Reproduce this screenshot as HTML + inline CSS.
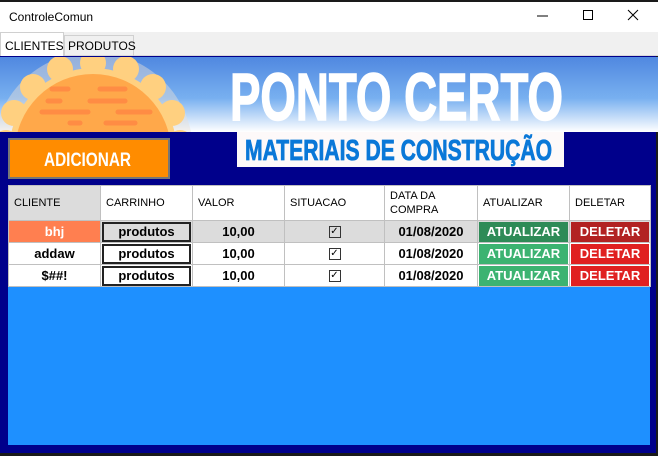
<!DOCTYPE html>
<html><head><meta charset="utf-8"><style>
*{margin:0;padding:0;box-sizing:border-box}
body{width:658px;height:456px;overflow:hidden;background:#1a1a1a;font-family:"Liberation Sans",sans-serif;position:relative}
.abs{position:absolute}
#title{left:0;top:2px;width:658px;height:30px;background:#fff;font-size:12px}
#tabs{left:0;top:32px;width:658px;height:24px;background:#f0f0f0;border-bottom:1px solid #d9d9d9}
.tab{position:absolute;font-size:12px;color:#000;border:1px solid #d0d0d0;border-bottom:none;white-space:nowrap}
#navy{left:0;top:56px;width:656px;height:397px;background:#00008b}
#grid{left:8px;top:185px;width:642px;height:260px;background:#1e90ff}
table{position:absolute;left:8px;top:185px;border-collapse:collapse;font-size:11px;table-layout:fixed;width:642px}
td{border:1px solid #c0c0c0;padding:0;height:22px;text-align:center;font-weight:bold;font-size:13px;background:#fff;overflow:hidden;line-height:20px}
tr.h td{height:35px;font-weight:normal;font-size:11px;text-align:left;padding-left:5px;line-height:14px}
.p{display:block;margin:0 1px;border:2px solid #222;height:20px;line-height:16px}
.at{background:#3cb371;color:#fff;height:20px;line-height:20px;margin:0 1px}
.de{background:#e02020;color:#fff;height:20px;line-height:20px;margin:0 1px}
.cb{display:inline-block;width:12px;height:12px;border:1px solid #333;font-size:10px;line-height:10px;font-weight:normal;vertical-align:middle}
</style></head><body>
<div id="title" class="abs"><span style="position:absolute;left:9px;top:8px">ControleComun</span>
<svg class="abs" style="left:0;top:0" width="658" height="30"><line x1="537" y1="14" x2="548" y2="14" stroke="#000"/><rect x="583.5" y="8.5" width="9" height="9" fill="none" stroke="#000"/><path d="M628 8L638 18M638 8L628 18" stroke="#000"/></svg></div>
<div id="tabs" class="abs">
<div class="tab" style="left:0;top:0;width:64px;height:25px;background:#fff;padding:6px 0 0 4px">CLIENTES</div>
<div class="tab" style="left:64px;top:3px;width:70px;height:21px;padding:3px 0 0 3px">PRODUTOS</div>
</div>
<div id="navy" class="abs"></div>
<svg class="abs" style="left:0;top:57px" width="658" height="75">
<defs><linearGradient id="sky" x1="0" y1="0" x2="0" y2="1"><stop offset="0" stop-color="#5088e0"/><stop offset="0.55" stop-color="#78b0f0"/><stop offset="1" stop-color="#ffffff"/></linearGradient>
<clipPath id="c"><rect width="658" height="75"/></clipPath></defs>
<rect width="658" height="75" fill="url(#sky)"/>
<g clip-path="url(#c)">
<circle cx="93" cy="95" r="100" fill="#e8e0d8" opacity="0.45"/>
<g fill="#ffd080">
<circle cx="93" cy="95" r="84"/>
<circle cx="93" cy="6" r="13"/><circle cx="126" cy="12" r="13"/><circle cx="60" cy="12" r="13"/><circle cx="153" cy="30" r="13"/><circle cx="33" cy="30" r="13"/><circle cx="172" cy="56" r="13"/><circle cx="14" cy="56" r="13"/><circle cx="180" cy="86" r="13"/><circle cx="6" cy="86" r="13"/>
</g>
<circle cx="93" cy="95" r="78" fill="#ffa84a"/>
<g stroke="#ff8c44" stroke-width="5" stroke-linecap="round"><line x1="52" y1="32" x2="68" y2="32"/><line x1="100" y1="32" x2="125" y2="32"/><line x1="48" y1="44" x2="60" y2="44"/><line x1="90" y1="44" x2="125" y2="44"/><line x1="42" y1="55" x2="88" y2="55"/><line x1="118" y1="55" x2="150" y2="55"/><line x1="70" y1="66" x2="80" y2="66"/><line x1="106" y1="66" x2="135" y2="66"/></g>
</g>
<text x="230" y="63" font-family="Liberation Sans" font-weight="bold" font-size="67" fill="#fff" stroke="#fff" stroke-width="1.5" textLength="333" lengthAdjust="spacingAndGlyphs">PONTO CERTO</text>
</svg>
<svg class="abs" style="left:237px;top:132px" width="327" height="35"><rect width="327" height="35" fill="#fdf9f9"/><text x="8" y="28" font-family="Liberation Sans" font-weight="bold" font-size="29" fill="#0a78d8" stroke="#0a78d8" stroke-width="0.8" textLength="307" lengthAdjust="spacingAndGlyphs">MATERIAIS DE CONSTRUÇÃO</text></svg>
<div class="abs" style="left:8px;top:138px;width:162px;height:41px;background:#ff8c00;border:2px solid #777"></div>
<svg class="abs" style="left:8px;top:138px" width="162" height="41"><text x="36" y="28" font-family="Liberation Sans" font-weight="bold" font-size="19" fill="#fff" textLength="87" lengthAdjust="spacingAndGlyphs">ADICIONAR</text></svg>
<div id="grid" class="abs"></div>
<table>
<colgroup><col style="width:92px"><col style="width:92px"><col style="width:92px"><col style="width:100px"><col style="width:93px"><col style="width:92px"><col style="width:81px"></colgroup>
<tr class="h"><td style="background:#dcdcdc">CLIENTE</td><td>CARRINHO</td><td>VALOR</td><td>SITUACAO</td><td>DATA DA<br>COMPRA</td><td>ATUALIZAR</td><td>DELETAR</td></tr>
<tr><td style="background:#ff7f50;color:#fff">bhj</td><td style="background:#dcdcdc"><span class="p">produtos</span></td><td style="background:#dcdcdc">10,00</td><td style="background:#dcdcdc"><span class="cb">✓</span></td><td style="background:#dcdcdc">01/08/2020</td><td style="background:#dcdcdc"><div class="at" style="background:#2e8b57">ATUALIZAR</div></td><td style="background:#dcdcdc"><div class="de" style="background:#b22222">DELETAR</div></td></tr>
<tr><td>addaw</td><td><span class="p">produtos</span></td><td>10,00</td><td><span class="cb">✓</span></td><td>01/08/2020</td><td><div class="at">ATUALIZAR</div></td><td><div class="de">DELETAR</div></td></tr>
<tr><td>$##!</td><td><span class="p">produtos</span></td><td>10,00</td><td><span class="cb">✓</span></td><td>01/08/2020</td><td><div class="at">ATUALIZAR</div></td><td><div class="de">DELETAR</div></td></tr>
</table>
</body></html>
